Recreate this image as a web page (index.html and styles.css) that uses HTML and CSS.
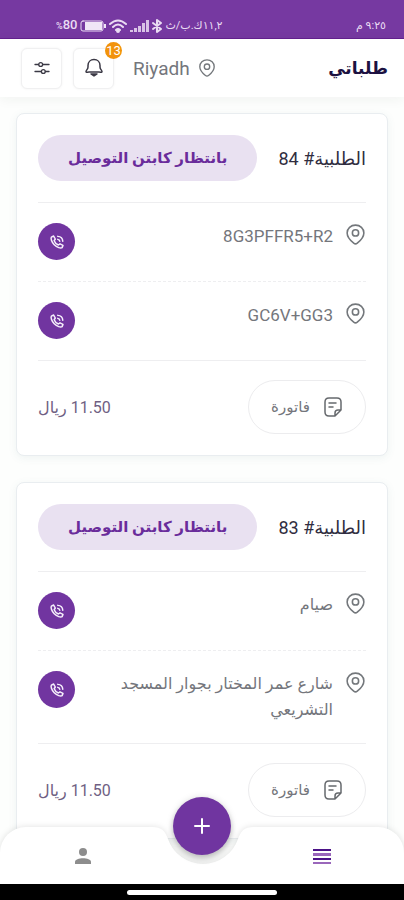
FILE: index.html
```
<!DOCTYPE html>
<html lang="ar" dir="rtl">
<head>
<meta charset="utf-8">
<meta name="viewport" content="width=device-width, initial-scale=1">
<title>طلباتي</title>
<link rel="stylesheet" href="styles.css">
</head>
<body>
<svg class="defs" aria-hidden="true">
  <symbol id="pin" viewBox="0 0 20 22"><path d="M10 2C5.500 2 2 5.300 2 9.500C2 14 5.500 17 8.300 19.300Q10 20.700 11.700 19.300C14.500 17 18 14 18 9.500C18 5.300 14.500 2 10 2Z"/><circle cx="10" cy="9.500" r="3"/></symbol>
  <symbol id="phone" viewBox="0 0 24 24"><path d="M7.500 4L4.500 5.500C3.500 7 4.500 12 8.300 15.700C12 19.500 17 20.700 18.800 19.500L20 16.500L16 14.500L13.800 16C12 15.300 9 12.300 8.200 10.300L9.700 8Z"/><path d="M13 8.500C14.500 8.700 15.500 9.500 15.700 11M13 4.500C17 4.700 19.500 7.300 19.700 11"/></symbol>
  <symbol id="note" viewBox="0 0 20 22"><path d="M12 20H6Q2 20 2 16V6Q2 2 6 2H14Q18 2 18 6V14L12 20V17Q12 14 15 14H18M6 7H13M6 11H10"/></symbol>
</svg>
<div class="app">
  <div class="status">
    <span>٩:٢٥ م</span>
    <div class="status-info">
      <span>١١,٢ك.ب/ث</span>
      <svg width="10" height="14" viewBox="0 0 10 14" class="line"><path d="M1 4L9 10L5 13V1L9 4L1 10"/></svg>
      <svg width="19" height="14" viewBox="0 0 19 14" class="solid"><path d="M0 11H3V13H0ZM4 9H7V13H4ZM8 7H11V13H8ZM12 4H15V13H12ZM16 1H19V13H16Z"/></svg>
      <svg width="18" height="14" viewBox="0 0 18 14" class="line"><path d="M1 5Q9 -2 17 5M4 8Q9 3 14 8M7 11Q9 9 11 11"/><circle cx="9" cy="12" r="1"/></svg>
      <svg width="26" height="12" viewBox="0 0 26 12"><rect x="1" y="1" width="22" height="10" rx="2" fill="none" stroke="#eadcf3" stroke-width="1"/><path fill="#f0e6f6" d="M5 2H22V10H5ZM24 4H26V8H24Z"/></svg>
      <span class="battery" dir="ltr"><small>%</small>80</span>
    </div>
  </div>
  <header class="header">
    <h1 class="title">طلباتي</h1>
    <div class="tools">
      <div class="city"><svg class="pin small"><use href="#pin"/></svg><span>Riyadh</span></div>
      <button class="tool" type="button" aria-label="الإشعارات">
        <svg width="20" height="22" viewBox="0 0 20 22"><path d="M5 15C3.500 15 2 16 2 14.500C2 13 4 12.500 4 10V8.500C4 5 6.500 2.500 10 2.500S16 5 16 8.500V10C16 12.500 18 13 18 14.500C18 16 16.500 15 15 15Z"/><path d="M7 17H13L10 19Z" fill="currentColor"/></svg>
        <span class="count">13</span>
      </button>
      <button class="tool" type="button" aria-label="تصفية">
        <svg width="16" height="14" viewBox="0 0 18 16"><path d="M1 4H5M10 4H17M1 12H8M13 12H17"/><circle cx="7.500" cy="4" r="2.200"/><circle cx="10.500" cy="12" r="2.200"/></svg>
      </button>
    </div>
  </header>
  <main class="orders">
    <article class="card">
      <div class="card-head"><h2 class="order-no">الطلبية# 84</h2><span class="state">بانتظار كابتن التوصيل</span></div>
      <div class="stop"><svg class="pin"><use href="#pin"/></svg><p class="place code">8G3PFFR5+R2</p><button class="call" type="button" aria-label="اتصال"><svg><use href="#phone"/></svg></button></div>
      <div class="stop"><svg class="pin"><use href="#pin"/></svg><p class="place code">GC6V+GG3</p><button class="call" type="button" aria-label="اتصال"><svg><use href="#phone"/></svg></button></div>
      <div class="card-foot"><button class="invoice" type="button"><svg class="note"><use href="#note"/></svg><span>فاتورة</span></button><span class="price">11.50 ريال</span></div>
    </article>
    <article class="card">
      <div class="card-head"><h2 class="order-no">الطلبية# 83</h2><span class="state">بانتظار كابتن التوصيل</span></div>
      <div class="stop"><svg class="pin"><use href="#pin"/></svg><p class="place">صيام</p><button class="call" type="button" aria-label="اتصال"><svg><use href="#phone"/></svg></button></div>
      <div class="stop"><svg class="pin"><use href="#pin"/></svg><p class="place">شارع عمر المختار بجوار المسجد التشريعي</p><button class="call" type="button" aria-label="اتصال"><svg><use href="#phone"/></svg></button></div>
      <div class="card-foot"><button class="invoice" type="button"><svg class="note"><use href="#note"/></svg><span>فاتورة</span></button><span class="price">11.50 ريال</span></div>
    </article>
  </main>
  <div class="dock">
    <nav class="nav">
      <a class="tab tab-start" href="#orders" aria-label="طلباتي"><svg width="20" height="18" viewBox="0 0 20 18"><path fill="#4b1287" d="M1 2H19V4H1ZM1 11H19V13H1Z"/><path fill="#9a67bb" d="M1 6H19V9H1ZM1 15H19V17H1Z"/></svg></a>
      <svg class="notch" width="110" height="57" viewBox="0 0 110 57"><path d="M0 0H4C14 0 17 4 20 12A37 37 0 0 0 90 12C93 4 96 0 106 0H110V57H0Z"/></svg>
      <a class="tab tab-end" href="#account" aria-label="حسابي"><svg width="18" height="18" viewBox="0 0 18 18"><circle cx="9" cy="5" r="4" fill="#8d8d8d"/><path fill="#8d8d8d" d="M1 17V15C1 10 17 10 17 15V17Z"/></svg></a>
      <button class="add" type="button" aria-label="طلب جديد"><svg width="16" height="16" viewBox="0 0 16 16"><path d="M8 1V15M1 8H15"/></svg></button>
    </nav>
    <div class="gesture"><span></span></div>
  </div>
</div>
</body>
</html>
```
FILE: styles.css
```
* { box-sizing: border-box; }
body {
  margin: 0;
  background: #fdfefd;
  color: #74767c;
  font-family: Roboto, "DejaVu Sans", sans-serif;
  font-size: 16px;
}
h1, h2, p { margin: 0; }
button { font: inherit; color: inherit; padding: 0; }
svg { display: block; flex: none; fill: none; stroke-linecap: round; stroke-linejoin: round; }
.defs { position: absolute; width: 0; height: 0; }
.app { position: relative; display: flex; flex-direction: column; height: 100vh; overflow: hidden; }

.status {
  flex: none;
  display: flex;
  justify-content: space-between;
  align-items: flex-end;
  height: 39px;
  padding: 0 18px 4px 56px;
  background: #7639a1;
  border-bottom: 1px solid #64208f;
  color: #eadcf3;
  font-size: 11px;
  line-height: 16px;
}
.status-info { display: flex; align-items: center; gap: 3px; }
.status .line { stroke: #eadcf3; stroke-width: 2; }
.status .solid { fill: #d9c3e6; }
.battery { font-size: 13px; font-weight: 500; }
.battery small { font-size: 9px; }

.header {
  flex: none;
  display: flex;
  justify-content: space-between;
  align-items: center;
  height: 58px;
  padding: 0 16px 0 21px;
  background: #fff;
  box-shadow: 0 2px 12px rgba(40, 50, 40, 0.06);
}
.title { color: #1c1241; font-size: 17px; font-weight: 700; }
.tools { display: flex; align-items: center; gap: 11px; }
.city { display: flex; align-items: center; gap: 8px; padding-left: 8px; color: #74767c; font-size: 19px; }
.tool {
  position: relative;
  display: grid;
  place-items: center;
  width: 41px;
  height: 41px;
  border: 1px solid #f0f0f1;
  border-radius: 6px;
  background: #fff;
  box-shadow: 0 0 3px rgba(0, 0, 0, 0.05);
  color: #3b3945;
}
.tool svg { stroke: currentColor; stroke-width: 1.500; }
.count {
  position: absolute;
  top: -7px;
  right: -9px;
  width: 17px;
  height: 17px;
  border-radius: 50%;
  background: #f2930a;
  color: #fff;
  font-size: 13px;
  line-height: 17px;
  text-align: center;
}

.orders { flex: 1; min-height: 0; overflow: hidden; display: flex; flex-direction: column; gap: 26px; padding: 16px 16px 0; }
.card {
  flex: none;
  padding: 0 21px;
  border: 1px solid #e9edf0;
  border-radius: 8px;
  background: #fff;
  box-shadow: 0 2px 8px rgba(60, 110, 120, 0.08);
}
.card-head { display: flex; justify-content: space-between; align-items: center; height: 88px; }
.order-no { color: #302d40; font-size: 18px; font-weight: 400; white-space: nowrap; }
.state {
  padding: 0 30px;
  border-radius: 24px;
  background: #e9e1f1;
  color: #6a2c9b;
  font-size: 15px;
  font-weight: 700;
  line-height: 46px;
  white-space: nowrap;
}
.stop { display: flex; align-items: flex-start; min-height: 79px; padding: 20px 0; border-top: 1px solid #eeeef0; }
.stop + .stop { border-top-style: dashed; }
.pin { width: 21px; height: 23px; stroke: #73777b; stroke-width: 1.500; }
.pin.small { width: 18px; height: 20px; }
.place { flex: 1; padding: 0 12px 0 40px; font-size: 16px; line-height: 26px; }
.place.code { font-size: 17px; }
.call {
  flex: none;
  display: grid;
  place-items: center;
  width: 37px;
  height: 37px;
  border: 0;
  border-radius: 50%;
  background: #7135a0;
}
.call svg { width: 18px; height: 18px; stroke: #f6effb; stroke-width: 2; }
.card-foot { display: flex; justify-content: space-between; align-items: center; height: 95px; padding-bottom: 2px; border-top: 1px solid #eeeef0; }
.invoice {
  display: flex;
  justify-content: center;
  align-items: center;
  gap: 13px;
  width: 118px;
  height: 54px;
  border: 1px solid #ececee;
  border-radius: 27px;
  background: #fff;
  font-size: 15px;
}
.note { width: 20px; height: 22px; stroke: #66696d; stroke-width: 1.500; }
.price { color: #6f5f83; font-size: 16px; }

.dock { position: absolute; right: 0; bottom: 0; left: 0; }
.nav { position: relative; display: flex; height: 57px; filter: drop-shadow(0 0 3px rgba(0, 0, 0, 0.12)); }
.tab { flex: 1; display: flex; align-items: center; background: #fff; }
.tab-start { border-top-right-radius: 26px; padding-right: 72px; }
.tab-end { justify-content: flex-end; border-top-left-radius: 26px; padding-left: 74px; }
.notch path { fill: #fff; }
.add {
  position: absolute;
  top: -30px;
  left: calc(50% - 29px);
  display: grid;
  place-items: center;
  width: 58px;
  height: 58px;
  border: 0;
  border-radius: 50%;
  background: #7035a0;
  box-shadow: 0 4px 6px rgba(0, 0, 0, 0.2);
}
.add svg { stroke: #fff; stroke-width: 2; }
.gesture { display: flex; justify-content: center; align-items: center; height: 16px; background: #000; }
.gesture span { width: 150px; height: 5px; border-radius: 3px; background: #fff; }
```
